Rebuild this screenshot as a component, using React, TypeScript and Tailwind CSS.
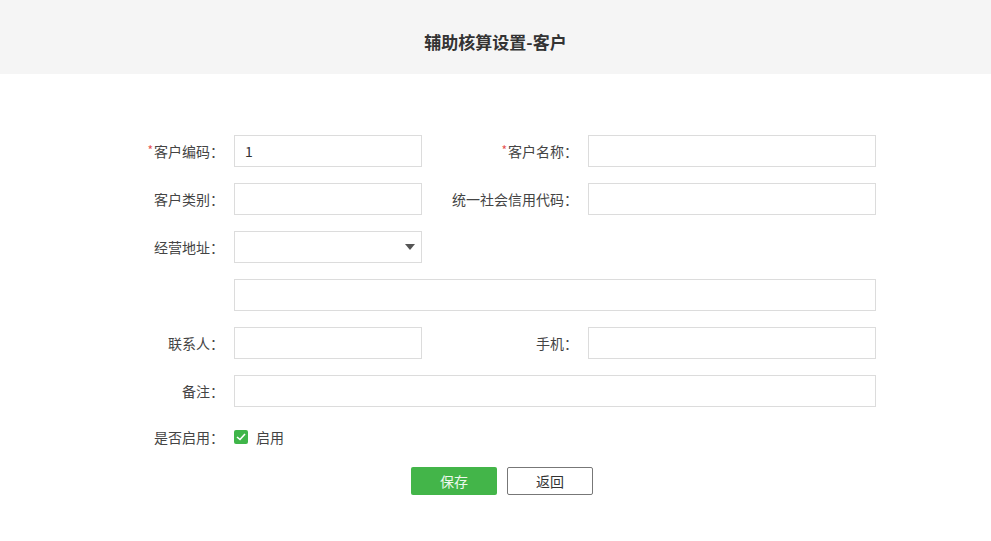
import React, { useState } from "react";

const font = { fontFamily: '"Noto Sans CJK SC", "Noto Sans", sans-serif' };

const Label = ({ text, required, w }: { text: string; required?: boolean; w: string }) => (
  <div className={`${w} h-[32px] shrink-0 pr-[10px] text-right text-[14px] leading-[32px] text-[#444]`}>
    {required && <span className="relative -top-[2px] mr-[1px] text-[12px] leading-none text-[#e55353]">*</span>}
    {text}：
  </div>
);

const Input = ({ w, value }: { w: string; value?: string }) => (
  <input
    defaultValue={value}
    className={`${w} h-[32px] border border-[#dcdcdc] bg-white px-[10px] text-[14px] text-[#333] outline-none`}
    style={font}
  />
);

export default function App() {
  const [enabled, setEnabled] = useState(true);

  return (
    <div className="min-h-screen w-full bg-white" style={font}>
      {/* Header */}
      <div className="flex h-[74px] items-center justify-center bg-[#f5f5f5] pt-[8px]">
        <h1 className="text-[17px] font-bold leading-none text-[#333]">辅助核算设置-客户</h1>
      </div>

      {/* Form */}
      <div className="flex flex-col gap-[16px] pl-[104px] pt-[61px]">
        <div className="flex">
          <Label w="w-[130px]" text="客户编码" required />
          <Input w="w-[188px]" value="1" />
          <Label w="w-[166px]" text="客户名称" required />
          <Input w="w-[288px]" />
        </div>

        <div className="flex">
          <Label w="w-[130px]" text="客户类别" />
          <Input w="w-[188px]" />
          <Label w="w-[166px]" text="统一社会信用代码" />
          <Input w="w-[288px]" />
        </div>

        <div className="flex">
          <Label w="w-[130px]" text="经营地址" />
          <div className="relative flex h-[32px] w-[188px] items-center justify-end border border-[#dcdcdc] bg-white pr-[6px]">
            <svg width="10" height="6" viewBox="0 0 10 6">
              <path d="M0 0 H10 L5 6 Z" fill="#555" />
            </svg>
          </div>
        </div>

        <div className="flex pl-[130px]">
          <Input w="w-[642px]" />
        </div>

        <div className="flex">
          <Label w="w-[130px]" text="联系人" />
          <Input w="w-[188px]" />
          <Label w="w-[166px]" text="手机" />
          <Input w="w-[288px]" />
        </div>

        <div className="flex">
          <Label w="w-[130px]" text="备注" />
          <Input w="w-[642px]" />
        </div>
      </div>

      <div className="mt-[14px] flex pl-[104px]">
        <Label w="w-[130px]" text="是否启用" />
        <label className="flex cursor-pointer items-center gap-[8px] text-[14px] text-[#444]">
          <span
            onClick={() => setEnabled(!enabled)}
            className={`flex h-[14px] w-[14px] items-center justify-center rounded-[2px] ${enabled ? "bg-[#3fb549]" : "border border-[#ccc] bg-white"}`}
          >
            {enabled && (
              <svg width="10" height="8" viewBox="0 0 10 8">
                <path d="M1 4 L4 6.5 L9 1" fill="none" stroke="#fff" strokeWidth="1.6" />
              </svg>
            )}
          </span>
          启用
        </label>
      </div>

      <div className="mt-[14px] flex gap-[10px] pl-[411px]">
        <button className="h-[28px] w-[86px] rounded-[2px] bg-[#43b549] text-[14px] text-[#eef8ee]">保存</button>
        <button className="h-[28px] w-[86px] rounded-[2px] border border-[#777] bg-white text-[14px] text-[#333]">返回</button>
      </div>
    </div>
  );
}
